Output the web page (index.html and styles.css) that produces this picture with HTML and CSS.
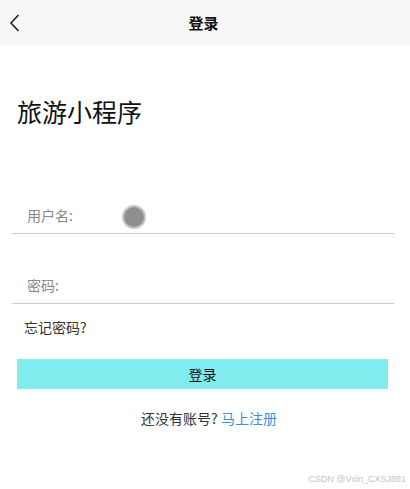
FILE: index.html
```html
<!DOCTYPE html>
<html lang="zh">
<head>
<meta charset="utf-8">
<title>登录</title>
<link rel="stylesheet" href="styles.css">
</head>
<body>
<div class="page">
  <header class="nav">
    <svg class="back" width="12" height="20" viewBox="0 0 12 20"><path d="M9.5 2 L2 10 L9.5 18" fill="none" stroke="#222" stroke-width="1.6"/></svg>
    <div class="nav-title">登录</div>
  </header>
  <h1 class="app-title">旅游小程序</h1>
  <div class="form">
    <div class="field field-user">
      <span class="label">用户名:</span>
      <span class="dot"></span>
    </div>
    <div class="field field-pass">
      <span class="label">密码:</span>
    </div>
    <div class="forgot">忘记密码?</div>
    <div class="btn">登录</div>
    <div class="register">还没有账号? <span class="link">马上注册</span></div>
  </div>
  <div class="watermark">CSDN @Vxin_CXSJ881</div>
</div>
</body>
</html>
```
FILE: styles.css
```css
* { box-sizing: border-box; margin: 0; padding: 0; }
body { margin: 0; background: #fff; font-family: "Noto Sans CJK SC", "Noto Sans", sans-serif; }
.page { width: 410px; height: 489px; position: relative; overflow: hidden; }
.nav { height: 46px; background: #f7f7f7; position: relative; display: flex; align-items: center; justify-content: center; }
.back { position: absolute; left: 9px; top: 13px; }
.nav-title { font-size: 15px; font-weight: bold; color: #111; line-height: 20px; margin-right: 3px; }
.app-title { font-size: 25px; font-weight: normal; color: #111; margin: 48px 0 0 17px; line-height: 34px; }
.form { margin-top: 60px; }
.field { margin: 0 16px 0 12px; height: 46px; border-bottom: 1px solid #cccccc; display: flex; align-items: center; padding-left: 15px; padding-top: 12px; }
.field-pass { margin-top: 24px; }
.label { font-size: 14px; color: #888; width: 95px; margin-bottom: 3px; }
.dot { width: 24px; height: 24px; border-radius: 50%; background: #8f8f8f; border: 2px solid #c8c8c8; }
.forgot { font-size: 14px; color: #333; margin: 13px 0 0 24px; line-height: 20px; }
.btn { margin: 22px 22px 0 17px; height: 30px; background: #80ecee; color: #111; font-size: 14px; display: flex; align-items: center; justify-content: center; }
.register { text-align: center; font-size: 14px; color: #333; margin-top: 19px; line-height: 20px; padding-left: 8px; }
.link { color: #3f8fd8; }
.watermark { position: absolute; right: 4px; bottom: 5px; font-family: "Liberation Sans", Arial, sans-serif; font-size: 9px; color: #c4c4c4; }
```
